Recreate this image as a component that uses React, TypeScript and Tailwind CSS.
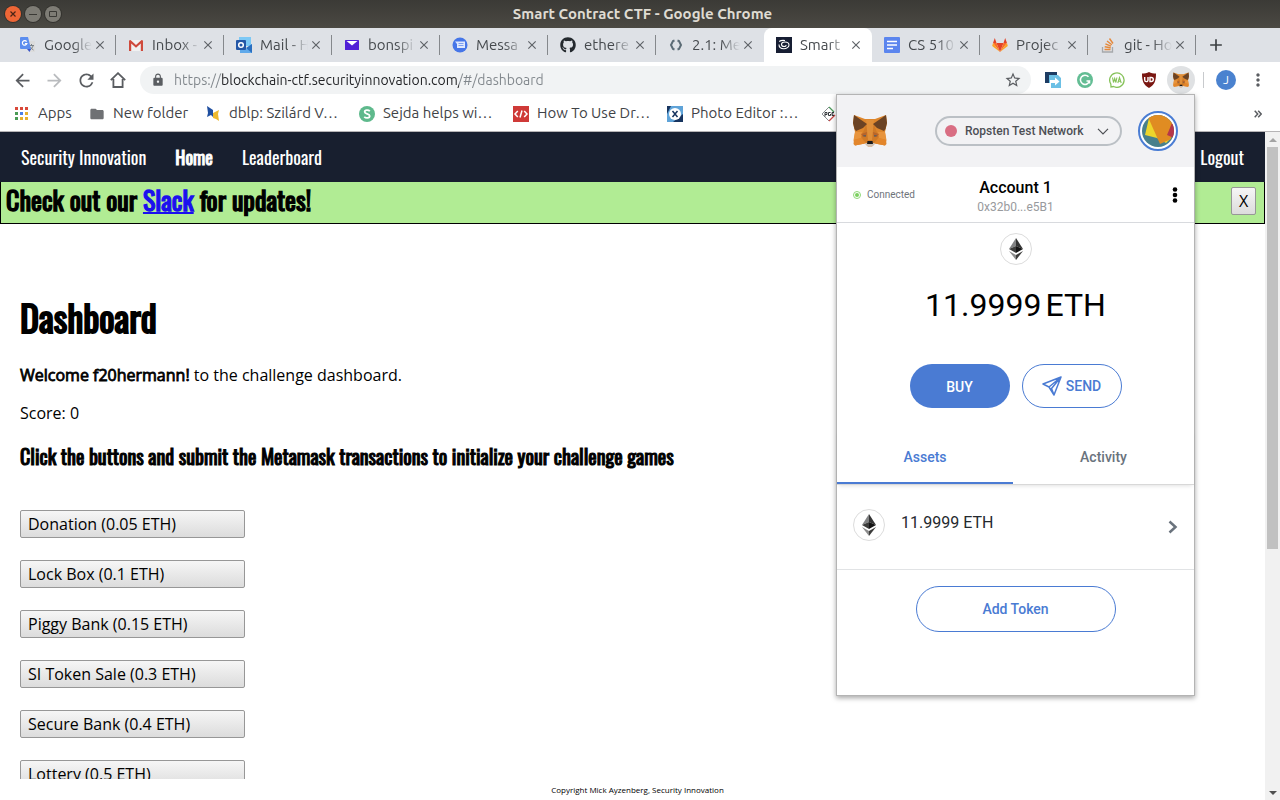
import type { ReactNode } from 'react';
import {
  MdArrowBack,
  MdArrowForward,
  MdRefresh,
  MdLock,
  MdStarBorder,
  MdMoreVert,
  MdFolder,
  MdClose,
  MdAdd,
} from 'react-icons/md';
import { FaGithub } from 'react-icons/fa';

const UI = "font-['Ubuntu','Noto_Sans',sans-serif]";
const NARROW = "font-['Oswald','Roboto_Condensed','Liberation_Sans_Narrow',sans-serif]";
const BODY = "font-['Open_Sans',sans-serif]";
const ROBOTO = "font-['Roboto',sans-serif]";
const HEAVY = 'font-normal [-webkit-text-stroke:0.05em_currentColor]';

function FoxIcon({ className }: { className: string }) {
  return (
    <svg viewBox="0 0 34 32" className={className} aria-hidden="true">
      <polygon fill="#dd862c" points="1,0 12,4 22,4 33,0 34,8 32,17 33.5,29 32,30.5 22,28.5 19,31.5 15,31.5 12,28.5 2,30.5 .5,29 2,17 0,8" />
      <polygon fill="#cf7a27" points="13,9 21,9 23,15 26,22 21,28 13,28 8,22 11,15" />
      <polygon fill="#e08f38" points="13,5 21,5 19,25 15,25" />
      <polygon fill="#6b4324" points="1,0 14,9 10,13 3,16 1.5,14 0,8" />
      <polygon fill="#6b4324" points="33,0 20,9 24,13 31,16 32.5,14 34,8" />
      <polygon fill="#e8943c" points="2,17 9,17 8,23 .5,25" />
      <polygon fill="#e8943c" points="32,17 25,17 26,23 33.5,25" />
      <polygon fill="#e3862b" points="0.5,25 8,23 12,28.5 2,30.5" />
      <polygon fill="#e3862b" points="33.5,25 26,23 22,28.5 32,30.5" />
      <polygon fill="#b8642a" points="8,19 14,17 13,22 10,22" />
      <polygon fill="#b8642a" points="26,19 20,17 21,22 24,22" />
      <polygon fill="#66605a" points="10,20 13,20 13,21.5 11,21.5" />
      <polygon fill="#66605a" points="24,20 21,20 21,21.5 23,21.5" />
      <polygon fill="#cdc0b4" points="12,28 22,28 21,30 19,31.5 15,31.5 13,30" />
      <polygon fill="#17191c" points="14.5,26 19.5,26 20,29 14,29" />
    </svg>
  );
}

function EthIcon() {
  return (
    <span className="flex size-8 shrink-0 items-center justify-center rounded-full border border-[#dcdcdc] bg-white">
      <svg viewBox="0 0 14 22" className="h-[22px] w-[14px]" aria-hidden="true">
        <polygon fill="#828384" points="7,0 0,11 7,8" />
        <polygon fill="#343434" points="7,0 14,11 7,8" />
        <polygon fill="#3c3c3b" points="0,11 7,8 7,15" />
        <polygon fill="#141414" points="14,11 7,8 7,15" />
        <polygon fill="#8c8c8c" points="0,13 7,17 7,22" />
        <polygon fill="#3c3c3b" points="14,13 7,17 7,22" />
      </svg>
    </span>
  );
}

const tabIcons: Record<string, ReactNode> = {
  translate: (
    <svg viewBox="0 0 16 16" className="size-4">
      <path fill="#dcdcdc" d="M7 4h8v11H9z" />
      <path stroke="#7b8288" fill="none" d="M9 8.500h5M11.500 7v1.500M13 9c-.5 2-2 3-3 4M10.500 10c.6 1.400 1.600 2 3 3" />
      <path fill="#5b8def" d="M1 0h7l3 12H1a1 1 0 0 1-1-1V1a1 1 0 0 1 1-1z" />
      <path fill="#3a55c8" d="M7 12h4l-1.500 3z" />
      <path fill="none" stroke="#fff" strokeWidth="1.200" d="M6.600 4.600a2.300 2.300 0 1 0 .3 2H4.900" />
    </svg>
  ),
  gmail: (
    <svg viewBox="0 0 16 16" className="size-4">
      <path fill="#f1f1f1" d="M1 3h14v11H1z" />
      <path fill="#cf4a3c" d="M1 3.500 2.500 3 8 8l5.500-5 1.500.5V14h-2.200V6.500L8 10.700 3.200 6.500V14H1z" />
    </svg>
  ),
  outlook: (
    <svg viewBox="0 0 16 16" className="size-4">
      <path fill="#7cc8f5" d="M3 0h12v9H3z" />
      <path fill="#4a9fe0" d="M3 4h6v6H3z" />
      <path fill="#5fa9ea" d="M16 7v9H4v-6l6 2z" />
      <path fill="#2a6fc0" d="m16 7-6 4 6 5z" />
      <rect fill="#2457a6" y="3" width="10" height="10" rx="1" />
      <circle cx="5" cy="8" r="2.300" fill="none" stroke="#fff" strokeWidth="1.500" />
    </svg>
  ),
  yahoo: (
    <svg viewBox="0 0 16 16" className="size-4">
      <rect x="1" y="3" width="14" height="10" rx=".5" fill="#5120d6" />
      <path fill="#fff" d="M2.500 4h11L8 8.500z" />
    </svg>
  ),
  messages: (
    <svg viewBox="0 0 16 16" className="size-4">
      <circle cx="8" cy="8" r="7.500" fill="#4676e8" />
      <path fill="#dfe8fd" d="M3 4.500h10V11H5V7z" />
      <path stroke="#7d9ff0" d="M6.500 6.500h5M6.500 8.500h5" />
    </svg>
  ),
  github: <FaGithub className="size-4 text-[#24292e]" />,
  code: (
    <svg viewBox="0 0 16 16" className="size-4" fill="none" stroke="#5b6b75" strokeWidth="2">
      <path d="M6.500 3.500 5 4 3 8l2 4 1.500.5M9.500 3.500 11 4l2 4-2 4-1.500.5" />
    </svg>
  ),
  smart: (
    <svg viewBox="0 0 16 16" className="size-4">
      <rect width="16" height="16" fill="#171e33" />
      <path fill="none" stroke="#fff" strokeWidth="1.100" d="M3 7.500c0 2.800 2 4.200 4.800 4.200S13 10 13 8 11 5 8.800 5 5.500 6 5.500 7.500s1.300 2 2.700 2 2-.8 1.800-1.500M3.200 4.500C4.500 3.500 7 3.200 9 3.500" />
    </svg>
  ),
  docs: (
    <svg viewBox="0 0 16 16" className="size-4">
      <rect width="16" height="16" rx="1" fill="#5b85ee" />
      <path stroke="#fff" strokeWidth="1.600" d="M3 4.500h10M3 8h10M3 11.500h6" />
    </svg>
  ),
  gitlab: (
    <svg viewBox="0 0 16 16" className="size-4">
      <path fill="#e24329" d="M8 15 4.500 6h7z" />
      <path fill="#fc6d26" d="M8 15 1 6h3.500zM8 15l7-9h-3.500z" />
      <path fill="#fca326" d="M1 6 .2 9 8 15zM15 6l.8 3L8 15z" />
      <path fill="#e24329" d="M1 6 2.800 1l1.700 5zM15 6l-1.800-5-1.700 5z" />
    </svg>
  ),
  stack: (
    <svg viewBox="0 0 16 16" className="size-4" fill="none">
      <path stroke="#a6a8ab" strokeWidth="1.300" d="M2.500 10v5h10v-5" />
      <path stroke="#e5883a" strokeWidth="1.400" d="M4.500 12.500h6M4.700 9.800l6 .9M5.400 6.800l5.600 2.300M7 4l4.800 3.700M9.500 1.500l3.500 5" />
    </svg>
  ),
};

const tabs = [
  { icon: 'translate', title: 'Google' },
  { icon: 'gmail', title: 'Inbox -' },
  { icon: 'outlook', title: 'Mail - H' },
  { icon: 'yahoo', title: 'bonspi' },
  { icon: 'messages', title: 'Messa' },
  { icon: 'github', title: 'ethere' },
  { icon: 'code', title: '2.1: Me' },
  { icon: 'smart', title: 'Smart', active: true },
  { icon: 'docs', title: 'CS 510' },
  { icon: 'gitlab', title: 'Projec' },
  { icon: 'stack', title: 'git - Ho' },
];

function TitleBar() {
  return (
    <div className="flex h-7 shrink-0 items-center bg-linear-to-b from-[#3b3a36] to-[#4b4943]">
      <div className="flex flex-1 gap-1 pl-[5px]">
        <button aria-label="Close window" className="flex size-4 items-center justify-center rounded-full bg-[#ee6636] ring-1 ring-[#33322e]">
          <svg viewBox="0 0 8 8" className="size-2" stroke="#4a2416" strokeWidth="1.200">
            <path d="m1.500 1.500 5 5m0-5-5 5" />
          </svg>
        </button>
        <button aria-label="Minimize window" className="flex size-4 items-center justify-center rounded-full bg-[#7e7c75] ring-1 ring-[#33322e]">
          <svg viewBox="0 0 8 8" className="size-2" stroke="#3a3935" strokeWidth="1">
            <path d="M0 4.500h8" />
          </svg>
        </button>
        <button aria-label="Maximize window" className="flex size-4 items-center justify-center rounded-full bg-[#7e7c75] ring-1 ring-[#33322e]">
          <svg viewBox="0 0 8 8" className="size-2" fill="none" stroke="#3a3935" strokeWidth="1">
            <path d="M.5 1.500h7v5h-7z" />
          </svg>
        </button>
      </div>
      <div className="text-[15px] font-bold text-[#dfdbd2]">Smart Contract CTF - Google Chrome</div>
      <div className="flex-1" />
    </div>
  );
}

function TabStrip() {
  return (
    <div className="flex h-[34px] shrink-0 bg-[#dee1e6] pl-2">
      <div className="flex max-w-[1188px] flex-1">
        {tabs.map((t, i) => (
          <div
            key={t.icon}
            className={
              t.active
                ? 'flex min-w-0 flex-1 items-center rounded-t-lg bg-white'
                : 'flex min-w-0 flex-1 items-center'
            }
          >
            <a href="#tab" className="flex min-w-0 flex-1 items-center gap-2 pl-3">
              <span className="size-4 shrink-0">{tabIcons[t.icon]}</span>
              <span className="min-w-0 flex-1 overflow-hidden text-[15px] whitespace-nowrap text-[#45494d] [mask-image:linear-gradient(to_right,black_60%,transparent)]">
                {t.title}
              </span>
            </a>
            <button aria-label={'Close tab ' + (i + 1)} className="mr-[7px] flex size-4 shrink-0 items-center justify-center text-[#5f6368]">
              <MdClose className="size-[14px]" />
            </button>
            <span className={t.active || tabs[i + 1]?.active ? 'w-px' : 'h-5 w-px bg-[#85888c]'} />
          </div>
        ))}
      </div>
      <button aria-label="New tab" className="flex w-10 items-center justify-center text-[#3c4043]">
        <MdAdd className="size-5" />
      </button>
    </div>
  );
}

function Toolbar() {
  return (
    <div className="flex h-9 shrink-0 items-center bg-white pl-1.5 text-[#5a5d61]">
      <button aria-label="Back" className="flex w-8 justify-center">
        <MdArrowBack className="size-[21px]" />
      </button>
      <button aria-label="Forward" className="flex w-8 justify-center text-[#b9bbbe]">
        <MdArrowForward className="size-[21px]" />
      </button>
      <button aria-label="Reload" className="flex w-8 justify-center">
        <MdRefresh className="size-[21px]" />
      </button>
      <button aria-label="Home" className="flex w-8 justify-center">
        <svg viewBox="0 0 16 16" className="size-4" fill="none" stroke="currentColor" strokeWidth="1.800">
          <path d="M.8 8.200 8 1.200l7.200 7M3.400 7v8h9.200V7" />
        </svg>
      </button>
      <div className="ml-1.5 flex h-7 flex-1 items-center rounded-full bg-[#f1f3f4]">
        <MdLock className="ml-[11px] size-[14px] shrink-0" />
        <input
          aria-label="Address"
          defaultValue="https://blockchain-ctf.securityinnovation.com/#/dashboard"
          className="ml-[9px] min-w-0 flex-1 bg-[linear-gradient(to_right,#80868b_47px,#202124_47px,#202124_285px,#80868b_285px)] bg-clip-text text-sm text-transparent outline-none"
        />
        <button aria-label="Bookmark this page" className="mr-[9px]">
          <MdStarBorder className="size-[18px]" />
        </button>
      </div>
      <div className="ml-1.5 flex items-center">
        <button aria-label="Page export" className="flex w-8 justify-center">
          <svg viewBox="0 0 16 16" className="size-4">
            <path fill="#1d3c63" d="M0 0h12v3H4v8H0z" />
            <path fill="#6cc0e5" d="M4 3h9l3 3v10H6V11H4z" />
            <path fill="#fff" d="M5 8h5V5.500l4.500 4-4.500 4V11H5z" />
          </svg>
        </button>
        <button aria-label="Grammar" className="flex w-8 justify-center">
          <svg viewBox="0 0 16 16" className="size-4">
            <circle cx="8" cy="8" r="8" fill="#63bd94" />
            <path fill="none" stroke="#fff" strokeWidth="1.500" d="M11.500 4.800A4.600 4.600 0 1 0 12.500 9H9.500M12.500 8.500v3" />
          </svg>
        </button>
        <button aria-label="WA" className="flex w-8 justify-center">
          <svg viewBox="0 0 16 16" className="size-4" fill="none" stroke="#86c25a">
            <path strokeWidth="1.300" d="M2 14.500 1.800 12A7.200 7.200 0 1 1 4.500 14.500L2 15z" />
            <path strokeWidth="1.100" d="m3.500 5.500 1 5 1.200-4 1.200 4 1-5M8.800 11l1.700-5.500L12.200 11M9.300 9.300h2.400" />
          </svg>
        </button>
        <button aria-label="UD" className="flex w-8 justify-center">
          <svg viewBox="0 0 16 16" className="size-4">
            <path fill="#7a1712" d="M8 0c2 1.200 4.500 1.500 7 1.500C15 9 13.500 13 8 16 2.500 13 1 9 1 1.500 3.500 1.500 6 1.200 8 0z" />
            <path fill="none" stroke="#fff" strokeWidth="1.400" d="M3.700 5v3a1.500 1.500 0 0 0 3.300 0V5M9 5.500h1.300a2 2 0 0 1 0 4H9z" />
          </svg>
        </button>
        <button aria-label="MetaMask" className="mx-0.5 flex size-7 items-center justify-center rounded-full bg-[#dfe1e3]">
          <FoxIcon className="size-4" />
        </button>
      </div>
      <div className="ml-1.5 h-4 w-px bg-[#c8cacd]" />
      <button aria-label="Profile" className="ml-3 flex size-5 items-center justify-center rounded-full bg-[#4a82cf] text-xs text-white">
        J
      </button>
      <button aria-label="Menu" className="mr-3 ml-3 flex justify-center">
        <MdMoreVert className="size-5" />
      </button>
    </div>
  );
}

const bookmarks: { label: string; width: string; icon: ReactNode }[] = [
  {
    label: 'Apps',
    width: 'w-[75px]',
    icon: (
      <svg viewBox="0 0 16 16" className="size-4">
        <path fill="#d9493a" d="M1 1h3v3H1zM6 1h3v3H6zM11 1h3v3h-3z" />
        <path fill="#4a9b55" d="M1 6h3v3H1zM1 11h3v3H1z" />
        <path fill="#4a7fe8" d="M6 6h3v3H6z" />
        <path fill="#e6b02e" d="M11 6h3v3h-3zM6 11h3v3H6zM11 11h3v3h-3z" />
      </svg>
    ),
  },
  { label: 'New folder', width: 'w-[116px]', icon: <MdFolder className="size-4 text-[#6f7174]" /> },
  {
    label: 'dblp: Szilárd V…',
    width: 'w-[154px]',
    icon: (
      <svg viewBox="0 0 16 16" className="size-4">
        <path fill="#1f4fa0" d="m2 0 6 4v7l-2-2-4 2 1-4z" />
        <path fill="#edb92e" d="m8 7 6-3-1 4 1 7-3-2-3-1z" />
      </svg>
    ),
  },
  {
    label: 'Sejda helps wi…',
    width: 'w-[154px]',
    icon: (
      <svg viewBox="0 0 16 16" className="size-4">
        <circle cx="8" cy="8" r="8" fill="#5eb98c" />
        <path fill="none" stroke="#fff" strokeWidth="1.800" d="M10.800 5.300C9.500 3.700 5.700 3.800 5.700 6c0 2.300 5 1.500 5 4 0 2.300-4 2.500-5.400.7" />
      </svg>
    ),
  },
  {
    label: 'How To Use Dr…',
    width: 'w-[154px]',
    icon: (
      <svg viewBox="0 0 16 16" className="size-4">
        <rect width="16" height="16" fill="#cf3a38" />
        <path fill="none" stroke="#fff" strokeWidth="1.500" d="M4.800 5 2 8l2.800 3M11.200 5 14 8l-2.800 3M9 4.500l-2 7" />
      </svg>
    ),
  },
  {
    label: 'Photo Editor :…',
    width: 'w-[154px]',
    icon: (
      <svg viewBox="0 0 16 16" className="size-4">
        <rect width="16" height="16" fill="#5fa3d8" />
        <path fill="#17345f" d="M0 8V0h4L0 8zM16 16H6l10-8z" />
        <circle cx="8" cy="8" r="6" fill="#fff" />
        <path stroke="#17345f" strokeWidth="1.500" d="m5.500 5 5 6m0-6-5 6" />
      </svg>
    ),
  },
  {
    label: '',
    width: 'w-4',
    icon: (
      <svg viewBox="0 0 16 16" className="size-4" fill="none">
        <path stroke="#8b8f93" d="M8 1 1 8l7 7" />
        <path stroke="#4c9b5b" strokeWidth="1.300" d="m8 1 5 5" />
        <path stroke="#c94545" strokeWidth="1.300" d="m8 15 6-6" />
        <path stroke="#33373b" d="M4 10.500V6.500h2v2H4M9.500 6.500H7.500v3h2V8M13 6.500h-2v3h2M11 8h1.500" />
      </svg>
    ),
  },
];

function BookmarksBar() {
  return (
    <div className="flex h-[34px] shrink-0 items-center border-b border-[#b6b4b6] bg-white pb-0.5 pl-3.5 text-[15px] text-[#3f4347]">
      {bookmarks.map((b) => (
        <a key={b.label} href="#bookmark" className={'flex shrink-0 items-center gap-2 whitespace-nowrap ' + b.width}>
          <span className="flex size-4 shrink-0 items-center">{b.icon}</span>
          {b.label}
        </a>
      ))}
      <button aria-label="More bookmarks" className="mr-[18px] ml-auto flex text-[#5a5d61]">
        <svg viewBox="0 0 8 8" className="size-2" fill="none" stroke="currentColor" strokeWidth="1.500">
          <path d="m.7.8 3 3.200-3 3.200M4.200.8l3 3.200-3 3.200" />
        </svg>
      </button>
    </div>
  );
}

const challenges = [
  'Donation (0.05 ETH)',
  'Lock Box (0.1 ETH)',
  'Piggy Bank (0.15 ETH)',
  'SI Token Sale (0.3 ETH)',
  'Secure Bank (0.4 ETH)',
  'Lottery (0.5 ETH)',
];

const greyButton = 'rounded-xs border border-[#979797] bg-linear-to-b from-[#f6f6f6] to-[#dcdcdc] text-black';

function Page() {
  return (
    <div className="flex min-h-0 flex-1 bg-white">
      <div className="flex min-w-0 flex-1 flex-col">
        <nav className={'flex h-[50px] shrink-0 items-center gap-[29px] bg-[#181f2f] px-[21px] text-lg text-white ' + NARROW}>
          <a href="#si">Security Innovation</a>
          <a href="#home" className={HEAVY}>Home</a>
          <a href="#leaderboard">Leaderboard</a>
          <a href="#logout" className="ml-auto">Logout</a>
        </nav>
        <div className="flex h-[42px] shrink-0 items-start justify-between border border-t-0 border-black bg-[#b1ec94] pr-2 pl-[5px]">
          <h2 className={'text-[26px] leading-9 text-black ' + NARROW + ' ' + HEAVY}>
            Check out our <a href="#slack" className="text-[#1b10ee] underline decoration-2">Slack</a> for updates!
          </h2>
          <button aria-label="Dismiss" className={'mt-[5px] h-7 w-[25px] text-base leading-6 ' + BODY + ' ' + greyButton}>X</button>
        </div>
        <main className={'min-h-0 flex-1 overflow-hidden px-5 pt-[68px] text-base leading-6 text-black ' + BODY}>
          <h1 className={'text-[36px] leading-[50px] ' + NARROW + ' ' + HEAVY}>Dashboard</h1>
          <p className="mt-[21px]"><b className={HEAVY}>Welcome f20hermann!</b> to the challenge dashboard.</p>
          <p className="mt-3.5">Score: 0</p>
          <h3 className={'mt-4 text-xl leading-[30px] ' + NARROW + ' ' + HEAVY}>
            Click the buttons and submit the Metamask transactions to initialize your challenge games
          </h3>
          <div className="mt-[39px] flex flex-col items-start gap-[22px]">
            {challenges.map((c) => (
              <button key={c} className={'h-7 w-[225px] shrink-0 px-[7px] text-left ' + greyButton}>{c}</button>
            ))}
          </div>
        </main>
        <footer className={'flex h-[21px] shrink-0 items-center justify-center pl-2.5 text-[8px] text-black ' + BODY}>
          Copyright Mick Ayzenberg, Security Innovation
        </footer>
      </div>
      <div className="flex w-[15px] shrink-0 flex-col items-center bg-[#f1f1f1]">
        <span className="flex h-[15px] items-center">
          <svg viewBox="0 0 8 4" className="h-1 w-2" fill="#a3a3a3"><path d="M0 4 4 0l4 4z" /></svg>
        </span>
        <div className="flex w-[11px] flex-1 flex-col">
          <div className="h-[63%] bg-[#c1c1c1]" />
        </div>
        <span className="flex h-[15px] items-center">
          <svg viewBox="0 0 8 4" className="h-1 w-2" fill="#505050"><path d="M0 0h8L4 4z" /></svg>
        </span>
      </div>
    </div>
  );
}

function WalletPopup() {
  return (
    <section className={'absolute top-[94px] right-[85px] w-[359px] border border-[#b4b4b4] bg-white pb-[63px] shadow-[0_2px_5px_rgba(0,0,0,0.35)] ' + ROBOTO}>
      <header className="flex h-[72px] items-center bg-[#f2f2f4] px-4">
        <FoxIcon className="h-8 w-[34px]" />
        <button className="ml-auto flex h-[30px] w-[187px] items-center rounded-full border-2 border-[#bbc0c5] pr-[11px] pl-2 text-xs font-medium text-[#4d4f54]">
          <span className="mr-2 size-3 rounded-full bg-[#d96e83]" />
          Ropsten Test Network
          <svg viewBox="0 0 12 7" className="ml-auto h-[7px] w-3" fill="none" stroke="#4d4f54" strokeWidth="1.200">
            <path d="m1 .8 5 5 5-5" />
          </svg>
        </button>
        <button aria-label="Accounts" className="ml-4 flex size-10 items-center justify-center rounded-full border-2 border-[#4a7dd4] bg-white">
          <svg viewBox="0 0 32 32" className="size-8">
            <clipPath id="avatar"><circle cx="16" cy="16" r="16" /></clipPath>
            <g clipPath="url(#avatar)">
              <rect width="32" height="32" fill="#48808c" />
              <path fill="#edd52c" d="M7 3 3 20l12 3 9 5 5-5z" />
              <path fill="#e08c22" d="M6 2 12-2h16l4 12-3 14-11 5z" />
              <path fill="#b5364a" d="m30 8-5 12 7 3 2-10z" />
            </g>
          </svg>
        </button>
      </header>
      <div className="grid h-14 grid-cols-[1fr_auto_1fr] items-center border-b border-[#d8dade] px-4">
        <div className="flex items-center text-[10px] text-[#6f747b]">
          <span className="mr-1.5 flex size-2 items-center justify-center rounded-full border border-[#8fd977]">
            <span className="size-1 rounded-full bg-[#7bd05f]" />
          </span>
          Connected
        </div>
        <button className="pt-1 text-center">
          <span className="block text-base leading-5 font-medium text-black">Account 1</span>
          <span className="block text-xs leading-[18px] text-[#989a9d]">0x32b0...e5B1</span>
        </button>
        <button aria-label="Account options" className="flex justify-end">
          <svg viewBox="0 0 6 16" className="h-4 w-1.5">
            <circle cx="3" cy="2.500" r="2.300" /><circle cx="3" cy="8" r="2.300" /><circle cx="3" cy="13.500" r="2.300" />
          </svg>
        </button>
      </div>
      <div className="flex flex-col items-center pt-2.5">
        <EthIcon />
        <p className="mt-5 flex gap-1 text-[32px] leading-10 text-black">
          <span>11.9999</span>
          <span>ETH</span>
        </p>
        <div className="mt-[39px] flex gap-3 text-sm font-medium">
          <button className="h-11 w-[100px] rounded-full bg-[#4a7bd3] pt-0.5 text-white">BUY</button>
          <button className="flex h-11 w-[100px] items-center justify-center gap-1 rounded-full border border-[#4a7bd3] text-[#4a7bd3]">
            <svg viewBox="0 0 20 20" className="size-5" fill="none" stroke="currentColor" strokeWidth="1.500" strokeLinejoin="round">
              <path d="M19 1 1 8l6 3 5 8zM19 1 7 11M19 1l-9.500 11.500L12 19" />
            </svg>
            SEND
          </button>
        </div>
      </div>
      <div className="mt-[21px] flex h-14 border-b border-[#d8d8d8] text-sm font-medium shadow-[0_3px_4px_-2px_rgba(0,0,0,0.12)]">
        <button className="w-44 border-b-2 border-[#4a7bd3] pt-0.5 text-[#4a7bd3]">Assets</button>
        <button className="flex-1 border-b-2 border-transparent pt-0.5 text-[#6a737d]">Activity</button>
      </div>
      <a href="#asset" className="flex h-[85px] items-center border-b border-[#e1e3e5] px-4 text-[#24292e]">
        <span className="flex items-center gap-4 pb-1">
          <EthIcon />
          <span className="pb-1 text-base">11.9999 ETH</span>
        </span>
        <svg viewBox="0 0 10 14" className="ml-auto h-3.5 w-2.5" fill="none" stroke="#6a737d" strokeWidth="2.500">
          <path d="m1.500 1.500 6 5.500-6 5.500" />
        </svg>
      </a>
      <button className="mx-auto mt-4 block h-[46px] w-[200px] rounded-full border border-[#4a7bd3] text-sm font-medium text-[#4a7bd3]">
        Add Token
      </button>
    </section>
  );
}

export default function App() {
  return (
    <div className={'relative flex h-screen flex-col overflow-hidden ' + UI}>
      <TitleBar />
      <TabStrip />
      <Toolbar />
      <BookmarksBar />
      <Page />
      <WalletPopup />
    </div>
  );
}
